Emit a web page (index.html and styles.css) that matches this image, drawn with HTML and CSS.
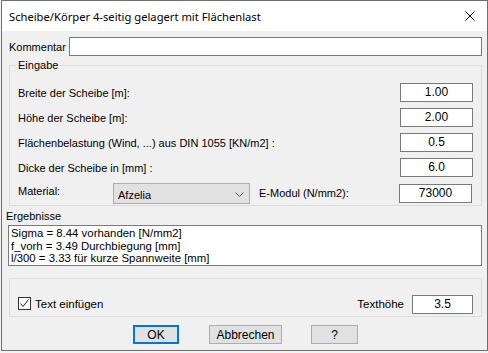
FILE: index.html
```html
<!DOCTYPE html>
<html lang="de">
<head>
    <meta charset="UTF-8">
    <title>Scheibe/Körper 4-seitig gelagert mit Flächenlast</title>
    <link rel="stylesheet" href="styles.css">
</head>
<body>
    <div class="window">
        <div class="titlebar">
            <span class="title">Scheibe/Körper 4-seitig gelagert mit Flächenlast</span>
            <span class="close">
                <svg width="10" height="10" viewBox="0 0 10 10"><path d="M0.5 0.5 L9.5 9.5 M9.5 0.5 L0.5 9.5" stroke="#000" stroke-width="1" fill="none"/></svg>
            </span>
        </div>

        <div class="dlg-body">
            <div class="comment-row">
                <span class="lbl">Kommentar</span>
                <div class="edit comment-edit"></div>
            </div>

            <div class="group input-group">
                <div class="legend">Eingabe</div>
                <div class="rows">
                    <div class="row">
                        <span class="lbl">Breite der Scheibe [m]:</span>
                        <div class="edit num">1.00</div>
                    </div>
                    <div class="row">
                        <span class="lbl">Höhe der Scheibe [m]:</span>
                        <div class="edit num">2.00</div>
                    </div>
                    <div class="row">
                        <span class="lbl">Flächenbelastung (Wind, ...) aus DIN 1055 [KN/m2] :</span>
                        <div class="edit num">0.5</div>
                    </div>
                    <div class="row">
                        <span class="lbl">Dicke der Scheibe in [mm] :</span>
                        <div class="edit num">6.0</div>
                    </div>
                    <div class="row material-row">
                        <span class="lbl mat-lbl">Material:</span>
                        <div class="combo">
                            <span>Afzelia</span>
                            <svg width="9" height="5" viewBox="0 0 9 5"><path d="M0.5 0.5 L4.5 4.5 L8.5 0.5" stroke="#555" stroke-width="1" fill="none"/></svg>
                        </div>
                        <span class="lbl emod-lbl">E-Modul (N/mm2):</span>
                        <div class="edit num emod">73000</div>
                    </div>
                </div>
            </div>

            <div class="results-lbl">Ergebnisse</div>
            <div class="results">
                <div>Sigma = 8.44 vorhanden [N/mm2]</div>
                <div>f_vorh = 3.49 Durchbiegung [mm]</div>
                <div>l/300 = 3.33 für kurze Spannweite [mm]</div>
            </div>

            <div class="group option-group">
                <label class="check">
                    <span class="box">
                        <svg width="11" height="11" viewBox="0 0 11 11"><path d="M1.5 5.5 L4 8.5 L9.5 1.5" stroke="#222" stroke-width="1" fill="none"/></svg>
                    </span>
                    Text einfügen
                </label>
                <span class="lbl th-lbl">Texthöhe</span>
                <div class="edit num th">3.5</div>
            </div>

            <div class="buttons">
                <button class="btn btn-ok">OK</button>
                <button class="btn btn-cancel">Abbrechen</button>
                <button class="btn btn-help">?</button>
            </div>
        </div>
    </div>
</body>
</html>
```

FILE: styles.css
```css
body {
    margin: 0;
    background: #f3f3f3;
    font-family: 'Liberation Sans', Arial, sans-serif;
    font-size: 11px;
    color: #000;
}

.window {
    margin-left: 1px;
    width: 487px;
    height: 351px;
    box-sizing: border-box;
    border: 1px solid #6f6f6f;
    background: #f0f0f0;
}

.titlebar {
    height: 30px;
    background: #fff;
    display: flex;
    align-items: center;
    justify-content: space-between;
    padding-left: 7px;
}

.title {
    font-family: 'Noto Sans', sans-serif;
    font-size: 11.2px;
}

.close {
    width: 34px;
    height: 30px;
    display: flex;
    align-items: center;
    justify-content: center;
}

.dlg-body {
    padding: 0 5px 0 7px;
}

.lbl {
    white-space: nowrap;
}

.edit {
    height: 19px;
    box-sizing: border-box;
    border: 1px solid #7a7a7a;
    background: #fff;
}

.num {
    width: 73px;
    text-align: center;
    font-size: 12px;
    line-height: 16px;
}

/* Kommentar */
.comment-row {
    margin-top: 6px;
    display: flex;
    align-items: center;
    justify-content: space-between;
}

.comment-edit {
    width: 413px;
}

/* Gruppen */
.group {
    border: 1px solid #dcdcdc;
    box-sizing: border-box;
}

.input-group {
    margin-top: 9px;
    height: 141px;
}

.legend {
    width: fit-content;
    margin: -8px 0 0 6px;
    padding: 0 2px;
    height: 14px;
    line-height: 14px;
    background: #f0f0f0;
}

.rows {
    margin-top: 11px;
    padding: 0 8px;
    display: flex;
    flex-direction: column;
    gap: 6px;
}

.row {
    display: flex;
    justify-content: space-between;
    align-items: flex-start;
    height: 19px;
}

.row .lbl {
    padding-top: 4px;
}

.material-row {
    height: 21px;
    justify-content: flex-start;
}

.material-row .mat-lbl {
    padding-top: 2px;
    width: 95px;
}

.combo {
    width: 137px;
    height: 21px;
    box-sizing: border-box;
    border: 1px solid #adadad;
    background: #e1e1e1;
    display: flex;
    align-items: center;
    justify-content: space-between;
    padding: 2px 5px 0 4px;
}

.emod-lbl {
    margin-left: 9px;
    padding-top: 4px;
}

.emod {
    margin-left: auto;
    margin-top: 1px;
    margin-right: 1px;
}

/* Ergebnisse */
.results-lbl {
    margin: 3px 0 0 -3px;
    height: 14px;
    line-height: 14px;
}

.results {
    margin: 2px 0 0 -1px;
    height: 41px;
    box-sizing: border-box;
    border: 1px solid #7a7a7a;
    background: #fff;
    padding: 1px 0 0 2px;
    font-size: 11.4px;
    line-height: 12.5px;
}

/* Optionen */
.option-group {
    margin-top: 12px;
    height: 39px;
    display: flex;
    align-items: flex-end;
    padding: 0 8px 2px 8px;
}

.check {
    display: flex;
    align-items: center;
    gap: 4px;
    margin-bottom: 4px;
    font-size: 11.5px;
}

.box {
    width: 13px;
    height: 13px;
    box-sizing: border-box;
    border: 1px solid #333;
    background: #fff;
    display: flex;
    align-items: center;
    justify-content: center;
}

.th-lbl {
    margin-left: auto;
    margin-right: 8px;
    margin-bottom: 4px;
    font-size: 11.5px;
}

.th {
    width: 61px;
}

/* Buttons */
.buttons {
    margin-top: 8px;
    display: flex;
    padding-left: 124px;
}

.btn {
    height: 19px;
    box-sizing: border-box;
    border: 1px solid #adadad;
    background: #e1e1e1;
    font-family: 'Liberation Sans', Arial, sans-serif;
    font-size: 12px;
    padding: 0;
}

.btn-ok {
    width: 46px;
    border: 2px solid #0078d7;
}

.btn-cancel {
    width: 73px;
    margin-left: 30px;
}

.btn-help {
    width: 47px;
    margin-left: 29px;
}
```
